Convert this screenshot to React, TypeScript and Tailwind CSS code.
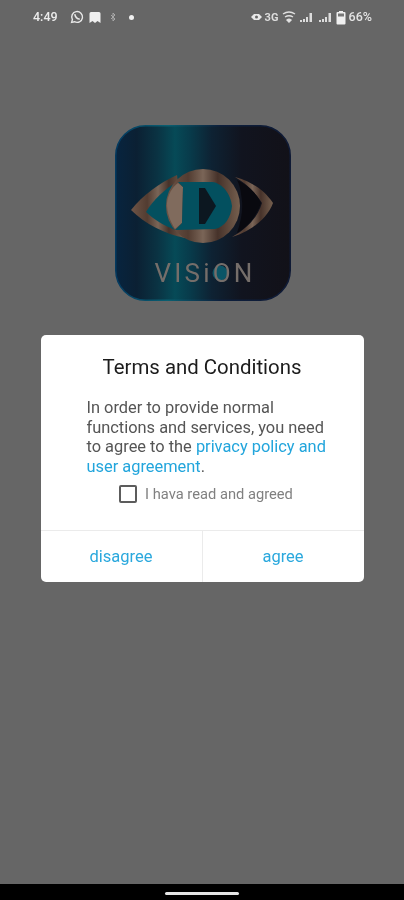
import React from 'react';

const Logo = () => (
  <svg width="176" height="176" viewBox="0 0 176 176" className="ml-[2px]">
    <defs>
      <linearGradient id="bg" x1="0" y1="0" x2="1" y2="0">
        <stop offset="0" stopColor="#07243f" />
        <stop offset="0.12" stopColor="#0b2033" />
        <stop offset="0.24" stopColor="#0a3343" />
        <stop offset="0.34" stopColor="#064a57" />
        <stop offset="0.43" stopColor="#083a4a" />
        <stop offset="0.55" stopColor="#0e2233" />
        <stop offset="0.72" stopColor="#11141f" />
        <stop offset="1" stopColor="#121118" />
      </linearGradient>
      <linearGradient id="edge" x1="0" y1="0" x2="1" y2="0">
        <stop offset="0" stopColor="#03395f" />
        <stop offset="0.3" stopColor="#0a5f70" />
        <stop offset="0.6" stopColor="#0d1f3c" />
        <stop offset="1" stopColor="#0f1a35" />
      </linearGradient>
      <linearGradient id="metal" x1="0" y1="0" x2="1" y2="0">
        <stop offset="0" stopColor="#6f5547" />
        <stop offset="0.3" stopColor="#523c31" />
        <stop offset="0.5" stopColor="#7a6557" />
        <stop offset="0.7" stopColor="#46322a" />
        <stop offset="1" stopColor="#76604f" />
      </linearGradient>
    </defs>
    <rect x="0.75" y="0.75" width="174.5" height="174.5" rx="30" fill="url(#bg)" stroke="url(#edge)" strokeWidth="1.5" />
    {/* left lid and teal wedge */}
    <path d="M16 85 C28 70 44 58 62 50 L70 113 C50 109 30 99 16 85Z" fill="url(#metal)" />
    <path d="M31 87 C38 75 50 64 63 56 L60 105 C50 101 38 94 31 87Z" fill="#04505f" />
    {/* iris */}
    <circle cx="88" cy="81" r="37" fill="url(#metal)" />
    <path d="M52 78 C53 70 57 62 63 58 L68 62 L67 98 L60 104 C55 96 52 88 52 78Z" fill="#806b5d" />
    {/* D */}
    <path d="M63 57 H97 C108 58 116 70 117 81 C116 92 110 102 100 104 L60 105 L67 98 L68 62Z" fill="#03505f" />
    <path d="M84 63 H90 L101 81 L90 99 H84Z" fill="#0c1720" />
    {/* right lid */}
    <path d="M120 52 C138 57 150 66 158 78 C152 94 136 106 117 112 C132 104 143 92 147 78 C140 67 132 59 120 52Z" fill="url(#metal)" />
    <path d="M122 55 C134 61 142 69 146 78 C142 91 132 102 122 108 C126 96 128 86 127 76 C126 67 125 60 122 55Z" fill="#09090f" />
    <circle cx="105" cy="148" r="7.5" fill="#0b5566" />
    <text x="90" y="157" textAnchor="middle" fontFamily="Roboto, sans-serif" fontSize="26" letterSpacing="3.2" fill="#756e6a">
      VISiON
    </text>
  </svg>
);

const WhatsApp = () => (
  <svg width="14" height="14" viewBox="0 0 14 14" fill="none" stroke="#e8e8e8" strokeWidth="1.4">
    <path d="M1.6 12.4 L2.4 9.6 A5.4 5.4 0 1 1 4.5 11.7 Z" />
    <path d="M5 4.2 C4.6 6.5 7.5 9.4 9.8 9" strokeWidth="1.6" />
  </svg>
);

const StatusLeft = () => (
  <div className="flex items-center">
    <span className="w-[37px] text-[12.5px] font-medium text-[#ececec]">4:49</span>
    <WhatsApp />
    <svg width="14" height="13" viewBox="0 0 13 13" className="ml-[4px]">
      <path d="M1 2.5 Q1 1 2.5 1 H10.5 Q12 1 12 2.5 V12 L9 10 L6.5 12 L4 10 L1 12Z" fill="#f0f0f0" />
    </svg>
    <svg width="6" height="10" viewBox="0 0 6 10" fill="none" stroke="#a8a8a8" strokeWidth="1" className="ml-[8px]">
      <path d="M1 3 L5 7 L3 9 V1 L5 3 L1 7" />
    </svg>
    <span className="ml-[13px] size-[5px] rounded-full bg-[#f0f0f0]" />
  </div>
);

const Signal = () => (
  <svg width="14" height="11" viewBox="0 0 14 11" fill="#dcdcdc">
    <rect x="0" y="8" width="2" height="2" />
    <rect x="3" y="7" width="2" height="3" />
    <rect x="6" y="5" width="2" height="5" />
    <rect x="9.5" y="1" width="2.5" height="9" />
  </svg>
);

const StatusRight = () => (
  <div className="flex items-center">
    <svg width="11" height="10" viewBox="0 0 11 10">
      <path d="M0 5 L3 2 H8 L11 5 L8 8 H3Z" fill="#e8e8e8" />
      <circle cx="5.5" cy="5" r="1.5" fill="#666" />
    </svg>
    <span className="ml-[3px] w-[15px] text-[11px] leading-[11px] font-bold text-[#dcdcdc]">3G</span>
    <svg width="14" height="12" viewBox="0 0 14 12" fill="none" stroke="#e0e0e0" strokeWidth="1.4" className="ml-[2px]">
      <path d="M1 3 Q7 -1 13 3" />
      <path d="M3 6 Q7 3.5 11 6" />
      <path d="M5 9 L7 11 L9 9 Q7 7.6 5 9Z" fill="#e0e0e0" />
    </svg>
    <div className="ml-[4px]"><Signal /></div>
    <div className="ml-[5px]"><Signal /></div>
    <svg width="10" height="15" viewBox="0 0 10 15" className="ml-[3px]">
      <path d="M3 1 H7 V2 H8.5 Q9.5 2 9.5 3 V13.5 Q9.5 14.5 8.5 14.5 H1.5 Q0.5 14.5 0.5 13.5 V3 Q0.5 2 1.5 2 H3Z" fill="#f0f0f0" />
      <rect x="2" y="3.5" width="6" height="3" fill="#777" />
    </svg>
    <span className="ml-[3px] text-[12.5px] font-medium text-[#e4e4e4]">66%</span>
  </div>
);

export default function App() {
  return (
    <div className="flex h-[900px] w-[404px] flex-col overflow-hidden bg-[#666666] font-['Roboto',sans-serif] blur-[0.4px]">
      <div className="flex h-[34px] shrink-0 items-center justify-between pl-[33px] pr-[32px]">
        <StatusLeft />
        <StatusRight />
      </div>

      <div className="flex flex-1 flex-col items-center pt-[91px]">
        <Logo />

        <div className="mt-[34px] flex h-[247px] w-[323px] flex-col rounded-[5px] bg-white">
          <h1 className="pt-[20px] text-center text-[20.4px] leading-[24px] font-normal text-[#1c1c1c]">
            Terms and Conditions
          </h1>
          <p className="mt-[19px] pl-[46px] pr-[30px] text-[16.4px] leading-[19.5px] text-[#555555]">
            In order to provide normal functions and services, you need to agree to the{' '}
            <span className="text-[#22a5dc]">privacy policy and user agreement</span>.
          </p>
          <label className="mt-[9px] flex items-center justify-center gap-[8px] pl-[8px]">
            <span className="size-[18px] rounded-[2px] border-2 border-[#5c5c5c] bg-white" />
            <span className="text-[14.7px] leading-[18px] text-[#808080]">I hava read and agreed</span>
          </label>
          <div className="mt-auto flex h-[52px] border-t border-[#ebebeb]">
            <button className="flex-1 pt-[2px] text-[16.5px] text-[#2aa8dd]">disagree</button>
            <button className="flex-1 border-l border-[#ebebeb] pt-[2px] text-[16.5px] text-[#2aa8dd]">agree</button>
          </div>
        </div>
      </div>

      <div className="flex h-[16px] shrink-0 items-center justify-center bg-black pt-[3px]">
        <div className="h-[3px] w-[74px] rounded-full bg-[#e6e6e6]" />
      </div>
    </div>
  );
}
